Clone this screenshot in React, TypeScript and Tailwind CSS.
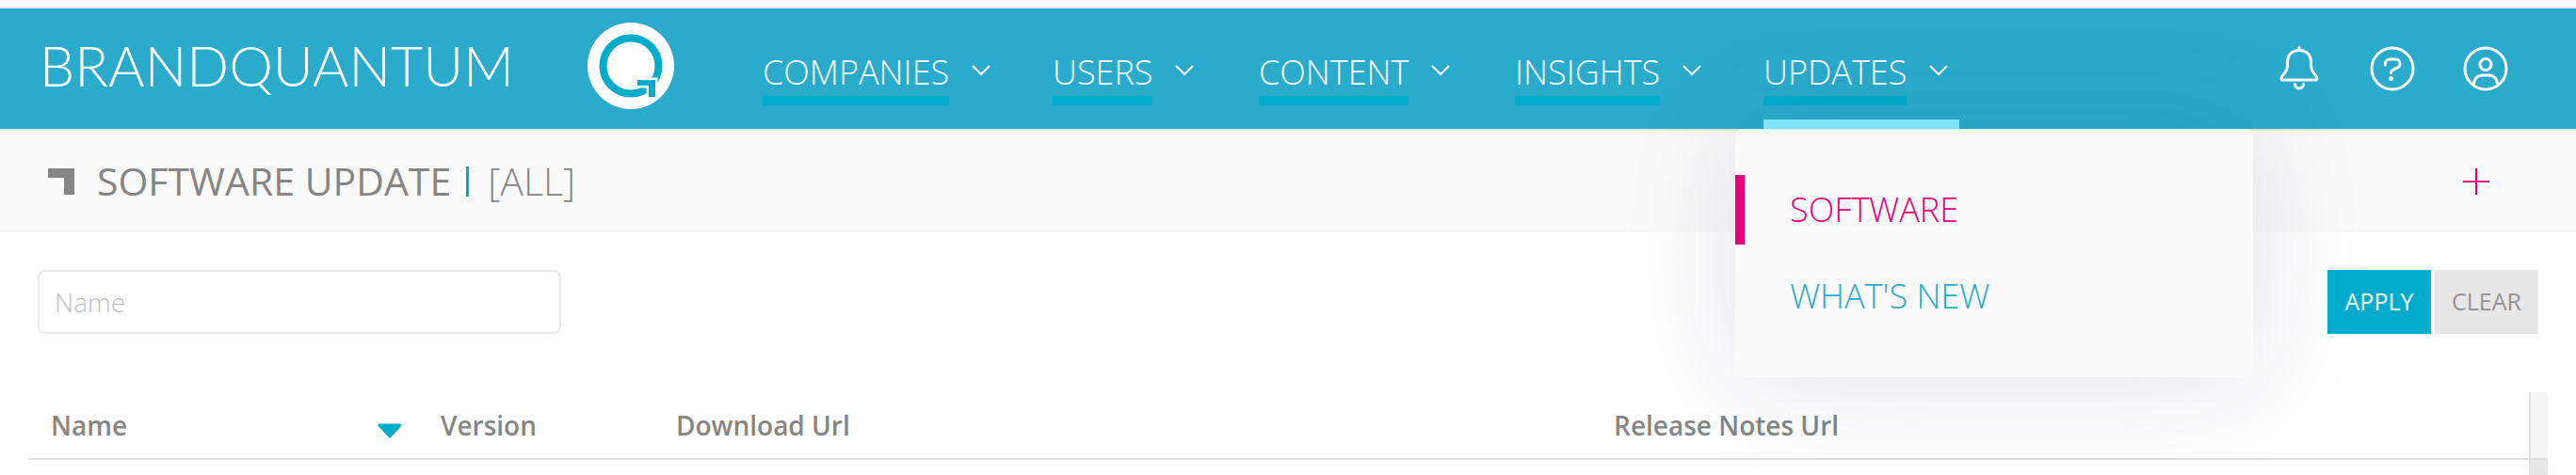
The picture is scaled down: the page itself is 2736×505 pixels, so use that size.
import React from "react";

const menu = ["Companies", "Users", "Content", "Insights", "Updates"];

const columns = ["Version", "Download Url", "Release Notes Url"];

function Logo() {
  return (
    <svg width="92" height="92" viewBox="0 0 92 92" className="shrink-0" aria-hidden="true">
      <circle cx="46" cy="46" r="46" fill="#fff" />
      <circle cx="46" cy="46" r="29.5" fill="none" stroke="#00accc" strokeWidth="8" />
      <path d="M53 61h19v18h-7V67H53z" fill="#fff" stroke="#fff" strokeWidth="5" />
      <path d="M53 61h19v18h-7V67H53z" fill="#00accc" />
    </svg>
  );
}

function Chevron() {
  return (
    <svg width="20" height="12" viewBox="0 0 20 12" fill="none" stroke="#fff" strokeWidth="2" className="mb-4" aria-hidden="true">
      <path d="M1 1l9 9 9-9" />
    </svg>
  );
}

function HeaderIcon({ label, children }: { label: string; children: React.ReactNode }) {
  return (
    <button type="button" aria-label={label}>
      <svg width="48" height="48" viewBox="0 0 48 48" fill="none" stroke="#fff" strokeWidth="3" strokeLinecap="round" strokeLinejoin="round">
        {children}
      </svg>
    </button>
  );
}

function UpdatesMenu() {
  return (
    <div className="absolute left-[-30px] top-full z-10 flex w-[550px] flex-col gap-[18px] rounded-lg bg-[#fafafa] py-[49px] text-[36px] font-light uppercase shadow-[0_0_120px_rgba(40,40,90,0.13)]">
      <a href="#software" className="flex h-[74px] items-center border-l-10 border-[#e6007e] pl-12 text-[#e6007e]">
        Software
      </a>
      <a href="#whats-new" className="flex h-[74px] items-center border-l-10 border-transparent pl-12 text-[#2aabcb]">
        What's New
      </a>
    </div>
  );
}

export default function App() {
  return (
    <div className="min-h-screen bg-white font-['Open_Sans',sans-serif] text-[#868686]">
      <div className="h-[9px] border-b-2 border-[#e0e0ea] bg-[#f9f9ff]"></div>

      <header className="flex h-32 bg-[#2aabcb] text-white">
        <a href="#home" className="ml-[42px] flex w-[768px] shrink-0 items-start pt-[15px]">
          <span className="flex h-[90px] w-[582px] items-center font-['Lato',sans-serif] text-[59px] font-light leading-none">BRANDQUANTUM</span>
          <Logo />
        </a>
        <nav className="flex-1">
          <ul className="grid h-full grid-cols-[308px_219px_272px_264px_208px]">
            {menu.map((item) => (
              <li key={item} className="relative h-full">
                <button type="button" className="flex items-center gap-6 pt-11">
                  <span className="border-b-10 border-[#00accc] pb-px text-[36px] font-light uppercase leading-[48px]">{item}</span>
                  <Chevron />
                </button>
                {item === "Updates" && (
                  <>
                    <span className="absolute bottom-0 left-0 z-20 h-2.5 w-full bg-[#80e2f7]"></span>
                    <UpdatesMenu />
                  </>
                )}
              </li>
            ))}
          </ul>
        </nav>
        <div className="flex items-center gap-[51px] pr-[72px]">
          <HeaderIcon label="Notifications">
            <path d="M24 1.5v3" />
            <path d="M24 4.5C16 4.5 11.5 10 11.5 16.5V21C11.5 28.5 5 30.5 5 34.5Q5 36 6.8 36H41.2Q43 36 43 34.5C43 30.5 36.5 28.5 36.5 21V16.5C36.5 10 32 4.5 24 4.5Z" />
            <path d="M19.5 40.5a4.5 4.5 0 0 0 9 0" />
          </HeaderIcon>
          <HeaderIcon label="Help">
            <circle cx="24" cy="24" r="22" />
            <path d="M16.5 20v-1.5a4.5 4.5 0 0 1 4.5-4.5h6.5a4.5 4.5 0 0 1 4.5 4.5v1c0 5-9.5 4-9.5 9" />
            <circle cx="22.5" cy="34.5" r="2.5" fill="#fff" stroke="none" />
          </HeaderIcon>
          <HeaderIcon label="Account">
            <circle cx="24" cy="24" r="22" />
            <circle cx="24" cy="19.5" r="6" />
            <path d="M11.5 41C11.5 34.5 15.5 31 21 31h6c5.5 0 9.5 3.5 9.5 10" />
          </HeaderIcon>
        </div>
      </header>

      <div className="flex h-[110px] items-center justify-between border-t-2 border-[#ebebee] bg-[#fafafa] pl-[51px] pr-[92px]">
        <h1 className="flex items-center text-[41px] uppercase">
          <svg width="28" height="28" viewBox="0 0 28 28" className="mr-6" aria-hidden="true">
            <path d="M0 0h28v28H17V10H0z" fill="#868686" />
          </svg>
          <span>Software Update</span>
          <span className="ml-4 mr-5 h-8 w-[3px] bg-[#00accc]"></span>
          <span className="font-light">[All]</span>
        </h1>
        <button type="button" aria-label="Add">
          <svg width="28" height="28" viewBox="0 0 28 28" stroke="#e6007e" strokeWidth="2">
            <path d="M14 0v28M0 14h28" />
          </svg>
        </button>
      </div>

      <form className="flex items-center gap-1 px-10 pb-[62px] pt-10">
        <input
          type="text"
          placeholder="Name"
          aria-label="Name"
          className="mr-auto h-[68px] w-[556px] rounded-lg border-2 border-[#ebebeb] px-4 text-[28px] font-light placeholder:text-[#c0c0c0]"
        />
        <button type="button" className="h-[68px] w-[110px] bg-[#00accc] text-[25px] text-white">
          APPLY
        </button>
        <button type="reset" className="h-[68px] w-[110px] bg-[#e7e7e7] text-[25px] text-[#959595]">
          CLEAR
        </button>
      </form>

      <div className="mx-[30px] flex">
        <div className="flex-1">
          <table className="h-[72px] w-full table-fixed text-left text-[28px]">
            <thead>
              <tr className="border-b-2 border-[#e0e0e0]">
                <th className="w-[414px] pl-6 pr-[17px] font-semibold">
                  <div className="flex items-center justify-between">
                    Name
                    <svg width="26" height="16" viewBox="0 0 26 16" className="mt-3" aria-hidden="true">
                      <path d="M2 2h22L13 14z" fill="#00accc" stroke="#00accc" strokeWidth="3" strokeLinejoin="round" />
                    </svg>
                  </div>
                </th>
                {columns.map((name) => (
                  <th key={name} className={name === "Version" ? "w-[250px] pl-6 font-semibold" : "pl-6 font-semibold"}>
                    {name}
                  </th>
                ))}
              </tr>
            </thead>
          </table>
        </div>
        <div className="flex w-5 flex-col">
          <div className="h-[72px] border-b-2 border-l-2 border-[#e0e0e0] bg-[#f5f5f5]"></div>
          <div className="h-4 bg-[#e7e7e7]"></div>
        </div>
      </div>
    </div>
  );
}
